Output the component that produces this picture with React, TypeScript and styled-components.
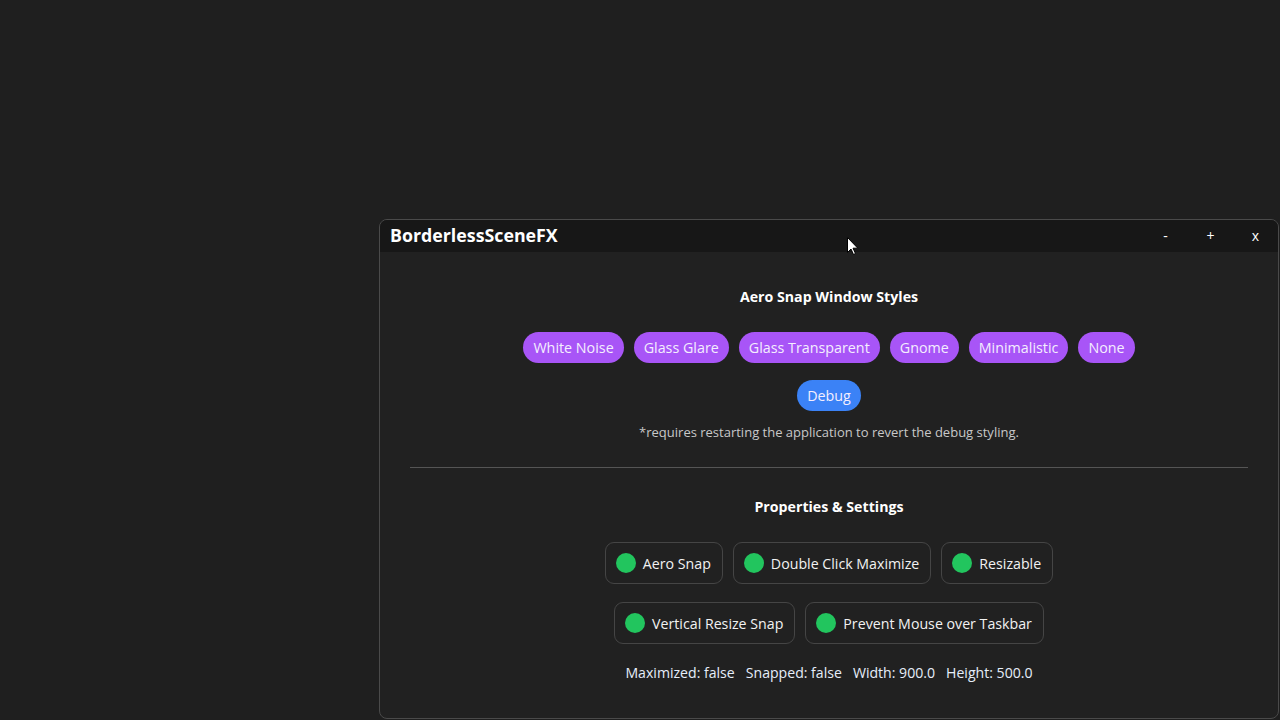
import React from "react";
import styled, { createGlobalStyle } from "styled-components";

const Global = createGlobalStyle`
  html, body { margin: 0; padding: 0; background: #1f1f1f; }
  body { width: 1280px; height: 720px; overflow: hidden; font-family: "Open Sans", "Noto Sans", sans-serif; }
  * { box-sizing: border-box; }
`;

const Desktop = styled.div`
  position: relative;
  width: 1280px;
  height: 720px;
  background: #1f1f1f;
`;

const Window = styled.div`
  position: absolute;
  left: 379px;
  top: 219px;
  width: 900px;
  height: 500px;
  border: 1px solid #4a4a4a;
  border-radius: 8px;
  background: #212121;
  overflow: hidden;
  display: flex;
  flex-direction: column;
`;

const TitleBar = styled.div`
  height: 32px;
  flex: none;
  background: #171717;
  display: flex;
  align-items: center;
  padding-left: 10px;
`;

const Title = styled.div`
  flex: 1;
  color: #ffffff;
  font-weight: 700;
  font-size: 17.8px;
  line-height: 22px;
  margin-bottom: 2px;
`;

const WinButton = styled.div`
  width: 45px;
  height: 32px;
  display: flex;
  align-items: center;
  justify-content: center;
  color: #ffffff;
  font-size: 14px;
  padding-bottom: 1px;
`;

const Content = styled.div`
  flex: 1;
  padding: 0 30px;
  display: flex;
  flex-direction: column;
  align-items: center;
`;

const Heading = styled.div<{ $top: number }>`
  margin-top: ${(p) => p.$top}px;
  color: #ffffff;
  font-weight: 700;
  font-size: 14.2px;
  line-height: 20px;
`;

const PillRow = styled.div<{ $top: number }>`
  display: flex;
  gap: 10px;
  justify-content: center;
  margin-top: ${(p) => p.$top}px;
`;

const Pill = styled.div<{ $color: string }>`
  height: 31px;
  padding: 0 10px;
  border-radius: 16px;
  background: ${(p) => p.$color};
  color: #f4eefe;
  font-size: 14.3px;
  display: flex;
  align-items: center;
  white-space: nowrap;
`;

const Note = styled.div`
  margin-top: 13px;
  color: #c8c8c8;
  font-size: 13px;
  line-height: 16px;
`;

const Divider = styled.div`
  align-self: stretch;
  height: 1px;
  background: #555555;
  margin-top: 27px;
`;

const ToggleRow = styled.div<{ $top: number }>`
  display: flex;
  gap: 10px;
  justify-content: center;
  margin-top: ${(p) => p.$top}px;
`;

const Toggle = styled.div`
  height: 42px;
  padding: 0 11px 0 10px;
  border: 1px solid #454545;
  border-radius: 9px;
  display: flex;
  align-items: center;
  gap: 7px;
  color: #f2f2f2;
  font-size: 14.2px;
  white-space: nowrap;
`;

const Dot = styled.span`
  width: 20px;
  height: 20px;
  border-radius: 50%;
  background: #22c55e;
  flex: none;
`;

const Status = styled.div`
  margin-top: 19px;
  display: flex;
  gap: 11px;
  color: #e6eefa;
  font-size: 14.1px;
  line-height: 20px;
`;

const Cursor = styled.svg`
  position: absolute;
  left: 847px;
  top: 237px;
`;

const styles = ["White Noise", "Glass Glare", "Glass Transparent", "Gnome", "Minimalistic", "None"];

export default function App() {
  return (
    <Desktop>
      <Global />
      <Window>
        <TitleBar>
          <Title>BorderlessSceneFX</Title>
          <WinButton>-</WinButton>
          <WinButton>+</WinButton>
          <WinButton>x</WinButton>
        </TitleBar>
        <Content>
          <Heading $top={35}>Aero Snap Window Styles</Heading>
          <PillRow $top={25}>
            {styles.map((s) => (
              <Pill key={s} $color="#a855f7">{s}</Pill>
            ))}
          </PillRow>
          <PillRow $top={17}>
            <Pill $color="#3b82f6">Debug</Pill>
          </PillRow>
          <Note>*requires restarting the application to revert the debug styling.</Note>
          <Divider />
          <Heading $top={29}>Properties &amp; Settings</Heading>
          <ToggleRow $top={25}>
            <Toggle><Dot />Aero Snap</Toggle>
            <Toggle><Dot />Double Click Maximize</Toggle>
            <Toggle><Dot />Resizable</Toggle>
          </ToggleRow>
          <ToggleRow $top={18}>
            <Toggle><Dot />Vertical Resize Snap</Toggle>
            <Toggle><Dot />Prevent Mouse over Taskbar</Toggle>
          </ToggleRow>
          <Status>
            <span>Maximized: false</span>
            <span>Snapped: false</span>
            <span>Width: 900.0</span>
            <span>Height: 500.0</span>
          </Status>
        </Content>
      </Window>
      <Cursor width="12" height="19" viewBox="0 0 12 19">
        <path d="M0.5 0.5 L0.5 15.5 L4 12 L6.5 17.5 L8.5 16.5 L6 11.2 L10.8 11.2 Z" fill="#ffffff" stroke="#000000" strokeWidth="1" strokeLinejoin="miter" />
      </Cursor>
    </Desktop>
  );
}
